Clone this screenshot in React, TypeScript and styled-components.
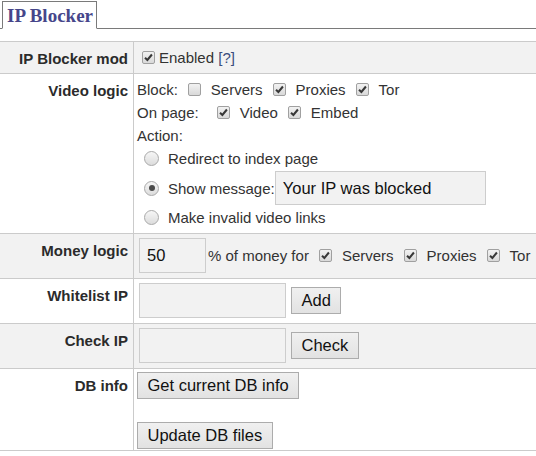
import React from "react";
import styled, { createGlobalStyle } from "styled-components";

const GlobalStyle = createGlobalStyle`
  body {
    margin: 0;
    background: #fff;
    font-family: "Liberation Sans", Arial, sans-serif;
    font-size: 15px;
    color: #333;
  }
`;

const CheckIcon = () => (
  <svg width="9" height="9" viewBox="0 0 9 9">
    <path d="M1 4.7 L3.4 7 L7.9 1.5" fill="none" stroke="#383838" strokeWidth="2" />
  </svg>
);

const Box = ({ checked }: { checked?: boolean }) => (
  <CheckBox role="checkbox" aria-checked={!!checked}>
    {checked ? <CheckIcon /> : null}
  </CheckBox>
);

const Option = ({
  checked,
  children,
  extra = 0,
}: {
  checked?: boolean;
  children: React.ReactNode;
  extra?: number;
}) => (
  <OptionLabel $extra={extra}>
    <Box checked={checked} />
    <OptionText>{children}</OptionText>
  </OptionLabel>
);

const Radio = ({ checked, children }: { checked?: boolean; children: React.ReactNode }) => (
  <RadioLabel>
    <RadioDot role="radio" aria-checked={!!checked} $checked={!!checked} />
    <OptionText $gap={9}>{children}</OptionText>
  </RadioLabel>
);

const App = () => {
  return (
    <>
      <GlobalStyle />
      <Page>
        <TabBar>
          <Tab>IP Blocker</Tab>
        </TabBar>

        <Form>
          <Row $shaded>
            <Label>IP Blocker mod</Label>
            <Cell>
              <Line>
                <FirstCheck>
                  <Box checked />
                </FirstCheck>
                <span>
                  Enabled <HelpLink href="#">[?]</HelpLink>
                </span>
              </Line>
            </Cell>
          </Row>

          <Row>
            <Label>Video logic</Label>
            <Cell>
              <Line>
                <span>Block:</span>
                <Option>Servers</Option>
                <Option checked>Proxies</Option>
                <Option checked>Tor</Option>
              </Line>
              <Line>
                <span>On page:</span>
                <Option checked extra={8}>Video</Option>
                <Option checked>Embed</Option>
              </Line>
              <Line>Action:</Line>
              <Radio>Redirect to index page</Radio>
              <RadioLabel $tall>
                <RadioDot role="radio" aria-checked $checked />
                <OptionText $gap={9}>Show message:</OptionText>
                <TextInput $width={211} defaultValue="Your IP was blocked" />
              </RadioLabel>
              <Radio>Make invalid video links</Radio>
            </Cell>
          </Row>

          <Row $shaded>
            <Label>Money logic</Label>
            <Cell $pad="4px 3px 5px">
              <Line>
                <TextInput $width={67} defaultValue="50" />
                <MoneyText>% of money for</MoneyText>
                <Option checked>Servers</Option>
                <Option checked>Proxies</Option>
                <Option checked>Tor</Option>
              </Line>
            </Cell>
          </Row>

          <Row>
            <Label>Whitelist IP</Label>
            <Cell $pad="4px 3px 5px">
              <Line>
                <TextInput $width={147} />
                <Button>Add</Button>
              </Line>
            </Cell>
          </Row>

          <Row $shaded>
            <Label>Check IP</Label>
            <Cell $pad="4px 3px 5px">
              <Line>
                <TextInput $width={147} />
                <Button>Check</Button>
              </Line>
            </Cell>
          </Row>

          <Row>
            <Label>DB info</Label>
            <Cell $pad="3px 3px 1px">
              <ButtonStack>
                <Button $flush>Get current DB info</Button>
                <Button $flush>Update DB files</Button>
              </ButtonStack>
            </Cell>
          </Row>
        </Form>
      </Page>
    </>
  );
};
export default App;

const Page = styled.div`
  width: 536px;
  padding-top: 1px;
`;

const TabBar = styled.div`
  display: flex;
  padding-left: 2px;
  border-bottom: 1px solid #7a7a7a;
`;

const Tab = styled.div`
  height: 26px;
  padding: 0 3px 0 4px;
  width: 86px;
  margin-bottom: -1px;
  border: 1px solid #7a7a7a;
  border-bottom: 1px solid #fff;
  background: #fff;
  font-family: "Liberation Serif", "Times New Roman", serif;
  font-weight: bold;
  font-size: 19px;
  line-height: 27px;
  color: #46468a;
  white-space: nowrap;
`;

const Form = styled.div`
  margin-top: 12px;
  border-top: 1px solid #cbcbcb;
`;

const Row = styled.div<{ $shaded?: boolean }>`
  display: grid;
  grid-template-columns: 134px 1fr;
  border-bottom: 1px solid #cbcbcb;
  background: ${(p) => (p.$shaded ? "#f2f2f2" : "#fff")};
`;

const Label = styled.div`
  padding: 8px 5px 0 0;
  border-right: 1px solid #cbcbcb;
  text-align: right;
  font-weight: bold;
  line-height: 17px;
  color: #2b2b2b;
`;

const Cell = styled.div<{ $pad?: string }>`
  padding: ${(p) => p.$pad || "4px 3px"};
  display: flex;
  flex-direction: column;
`;

const Line = styled.div`
  display: flex;
  align-items: center;
  min-height: 23px;
  white-space: nowrap;
`;

const FirstCheck = styled.span`
  display: inline-flex;
  margin: 0 4px 0 5px;
`;

const CheckBox = styled.span`
  display: inline-flex;
  align-items: center;
  justify-content: center;
  box-sizing: border-box;
  width: 13px;
  height: 13px;
  border: 1px solid #a0a0a0;
  border-radius: 2px;
  background: linear-gradient(#f2f2f2, #d9d9d9);
`;

const OptionLabel = styled.label<{ $extra: number }>`
  display: inline-flex;
  align-items: center;
  margin-left: ${(p) => 10 + p.$extra}px;
`;

const OptionText = styled.span<{ $gap?: number }>`
  margin-left: ${(p) => p.$gap ?? 10}px;
`;

const HelpLink = styled.a`
  color: #3b4d7c;
  text-decoration: none;
`;

const RadioLabel = styled.label<{ $tall?: boolean }>`
  display: flex;
  align-items: center;
  min-height: ${(p) => (p.$tall ? 36 : 23)}px;
  padding-left: 7px;
  white-space: nowrap;
`;

const RadioDot = styled.span<{ $checked: boolean }>`
  position: relative;
  box-sizing: border-box;
  width: 15px;
  height: 15px;
  border-radius: 50%;
  border: 1px solid #a9a9a9;
  background: linear-gradient(#f6f6f6, #dcdcdc);

  &::after {
    content: "";
    display: ${(p) => (p.$checked ? "block" : "none")};
    position: absolute;
    left: 3.5px;
    top: 3.5px;
    width: 6px;
    height: 6px;
    border-radius: 50%;
    background: #4a4a4a;
  }
`;

const TextInput = styled.input.attrs({ type: "text" })<{ $width: number }>`
  box-sizing: border-box;
  width: ${(p) => p.$width}px;
  height: 35px;
  margin: 0 0 0 2px;
  padding: 0 7px;
  border: 1px solid #cdcdcd;
  background: #f2f2f2;
  font-family: "Liberation Sans", Arial, sans-serif;
  font-size: 16.5px;
  color: #111;
  outline: none;

  ${RadioLabel} & {
    height: 34px;
    margin-left: 0;
  }
`;

const MoneyText = styled.span`
  margin-left: 2px;
`;

const Button = styled.button<{ $flush?: boolean }>`
  height: 27px;
  margin-left: ${(p) => (p.$flush ? 0 : 5)}px;
  padding: 0 9.5px;
  border: 1px solid #acacac;
  border-radius: 0;
  background: linear-gradient(#f0f0f0, #e2e2e2);
  font-family: "Liberation Sans", Arial, sans-serif;
  font-size: 16.5px;
  line-height: 19px;
  color: #111;
  white-space: nowrap;
`;

const ButtonStack = styled.div`
  display: flex;
  flex-direction: column;
  align-items: flex-start;
  gap: 23px;
`;
